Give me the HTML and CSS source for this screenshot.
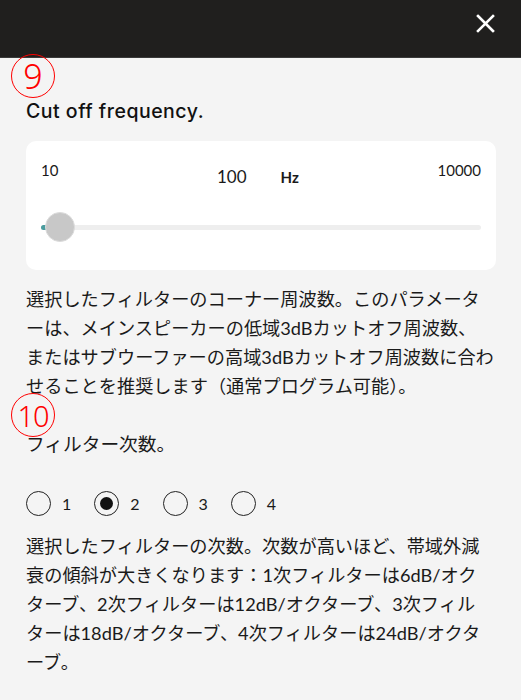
FILE: index.html
```html
<!DOCTYPE html>
<html lang="ja">
<head>
  <meta charset="UTF-8">
  <meta name="viewport" content="width=device-width, initial-scale=1.0">
  <title>Cut off frequency</title>
  <link rel="stylesheet" href="styles.css">
</head>
<body>
  <header class="topbar">
    <button class="close-btn" aria-label="閉じる">
      <svg width="19" height="19" viewBox="0 0 19 19">
        <path d="M2 2 L17 17 M17 2 L2 17" stroke="#fff" stroke-width="2.6" stroke-linecap="square" fill="none"/>
      </svg>
    </button>
  </header>

  <main class="page">
    <!-- 注釈マーク -->
    <span class="mark mark-9">9</span>
    <span class="mark mark-10">10</span>

    <!-- カットオフ周波数 -->
    <section class="block">
      <h2 class="title">Cut off frequency.</h2>

      <div class="card">
        <div class="range-labels">
          <span class="range-min">10</span>
          <div class="range-value">
            <span class="value">100</span>
            <span class="unit">Hz</span>
          </div>
          <span class="range-max">10000</span>
        </div>

        <div class="slider">
          <div class="track">
            <div class="fill"></div>
          </div>
          <div class="thumb"></div>
        </div>
      </div>

      <p class="desc">選択したフィルターのコーナー周波数。このパラメータ<br>ーは、メインスピーカーの低域3dBカットオフ周波数、<br>またはサブウーファーの高域3dBカットオフ周波数に合わ<br>せることを推奨します（通常プログラム可能）。</p>
    </section>

    <!-- フィルター次数 -->
    <section class="block block-order">
      <h2 class="subtitle">フィルター次数。</h2>

      <div class="radios">
        <label class="radio"><span class="dot"></span><span class="num">1</span></label>
        <label class="radio checked"><span class="dot"></span><span class="num">2</span></label>
        <label class="radio"><span class="dot"></span><span class="num">3</span></label>
        <label class="radio"><span class="dot"></span><span class="num">4</span></label>
      </div>

      <p class="desc desc-order">選択したフィルターの次数。次数が高いほど、帯域外減<br>衰の傾斜が大きくなります：1次フィルターは6dB/オク<br>ターブ、2次フィルターは12dB/オクターブ、3次フィル<br>ターは18dB/オクターブ、4次フィルターは24dB/オクタ<br>ーブ。</p>
    </section>
  </main>
</body>
</html>
```

FILE: styles.css
```css
body {
  margin: 0;
  padding: 0;
  background-color: #f4f4f4;
  font-family: "Lato", "Noto Sans CJK JP", sans-serif;
  color: #1a1a1a;
}

.topbar {
  height: 58px;
  background: #201f1e;
  border-bottom: 1px solid #3a3a3a;
  display: flex;
  justify-content: flex-end;
  align-items: flex-start;
  padding: 14px 26px 0 0;
  box-sizing: border-box;
}

.close-btn {
  background: none;
  border: none;
  padding: 0;
  width: 19px;
  height: 19px;
  cursor: pointer;
}

.close-btn svg {
  display: block;
}

.page {
  position: relative;
  padding: 0 25px 0 26px;
}

.mark {
  position: absolute;
  left: 11px;
  width: 44px;
  height: 44px;
  border: 1.3px solid #ff0000;
  border-radius: 50%;
  box-sizing: border-box;
  color: #ff0000;
  font-family: "Noto Sans", sans-serif;
  font-weight: 300;
  display: flex;
  align-items: center;
  justify-content: center;
}

.mark-9 {
  top: -4px;
  font-size: 34px;
}

.mark-10 {
  top: 335px;
  font-size: 29px;
  letter-spacing: -1px;
}

.title {
  margin: 0;
  padding-top: 41px;
  font-family: "Inter", "Noto Sans CJK JP", sans-serif;
  font-size: 19.5px;
  line-height: 24px;
  font-weight: 500;
  letter-spacing: 0.5px;
  color: #111;
}

.card {
  margin-top: 18px;
  background: #fff;
  border-radius: 10px;
  padding: 20px 15px 28px;
  height: 129px;
  box-sizing: border-box;
}

.range-labels {
  display: flex;
  justify-content: space-between;
  align-items: flex-start;
  font-size: 15px;
  line-height: 18px;
  height: 27px;
}

.range-value {
  display: flex;
  gap: 34px;
  margin-top: 7px;
  margin-left: 20px;
  align-items: baseline;
}

.value {
  font-size: 17px;
}

.unit {
  font-size: 15px;
  font-weight: 700;
}

.slider {
  position: relative;
  height: 30px;
  margin-top: 24px;
  display: flex;
  align-items: center;
}

.track {
  flex: 1;
  height: 5px;
  background: #eeeeee;
  border-radius: 3px;
  overflow: hidden;
}

.fill {
  width: 10px;
  height: 100%;
  background: #4a9c9e;
}

.thumb {
  position: absolute;
  left: 4px;
  top: 0;
  width: 30px;
  height: 30px;
  border-radius: 50%;
  background: #c8c8c8;
  border: 1px solid #dcdcdc;
  box-sizing: border-box;
}

.desc {
  margin: 15px 0 0;
  font-size: 18.2px;
  line-height: 29px;
  white-space: nowrap;
}

.block-order {
  padding-top: 29px;
}

.subtitle {
  margin: 0;
  font-size: 18.7px;
  line-height: 29px;
  font-weight: 400;
}

.radios {
  display: flex;
  gap: 23px;
  margin-top: 32px;
}

.radio {
  display: flex;
  align-items: center;
  gap: 11px;
  font-size: 16px;
  cursor: pointer;
}

.dot {
  width: 25px;
  height: 25px;
  border: 1.5px solid #222;
  border-radius: 50%;
  box-sizing: border-box;
  display: flex;
  align-items: center;
  justify-content: center;
}

.checked .dot::after {
  content: "";
  width: 13px;
  height: 13px;
  border-radius: 50%;
  background: #111;
}

.desc-order {
  margin-top: 16px;
}
```
